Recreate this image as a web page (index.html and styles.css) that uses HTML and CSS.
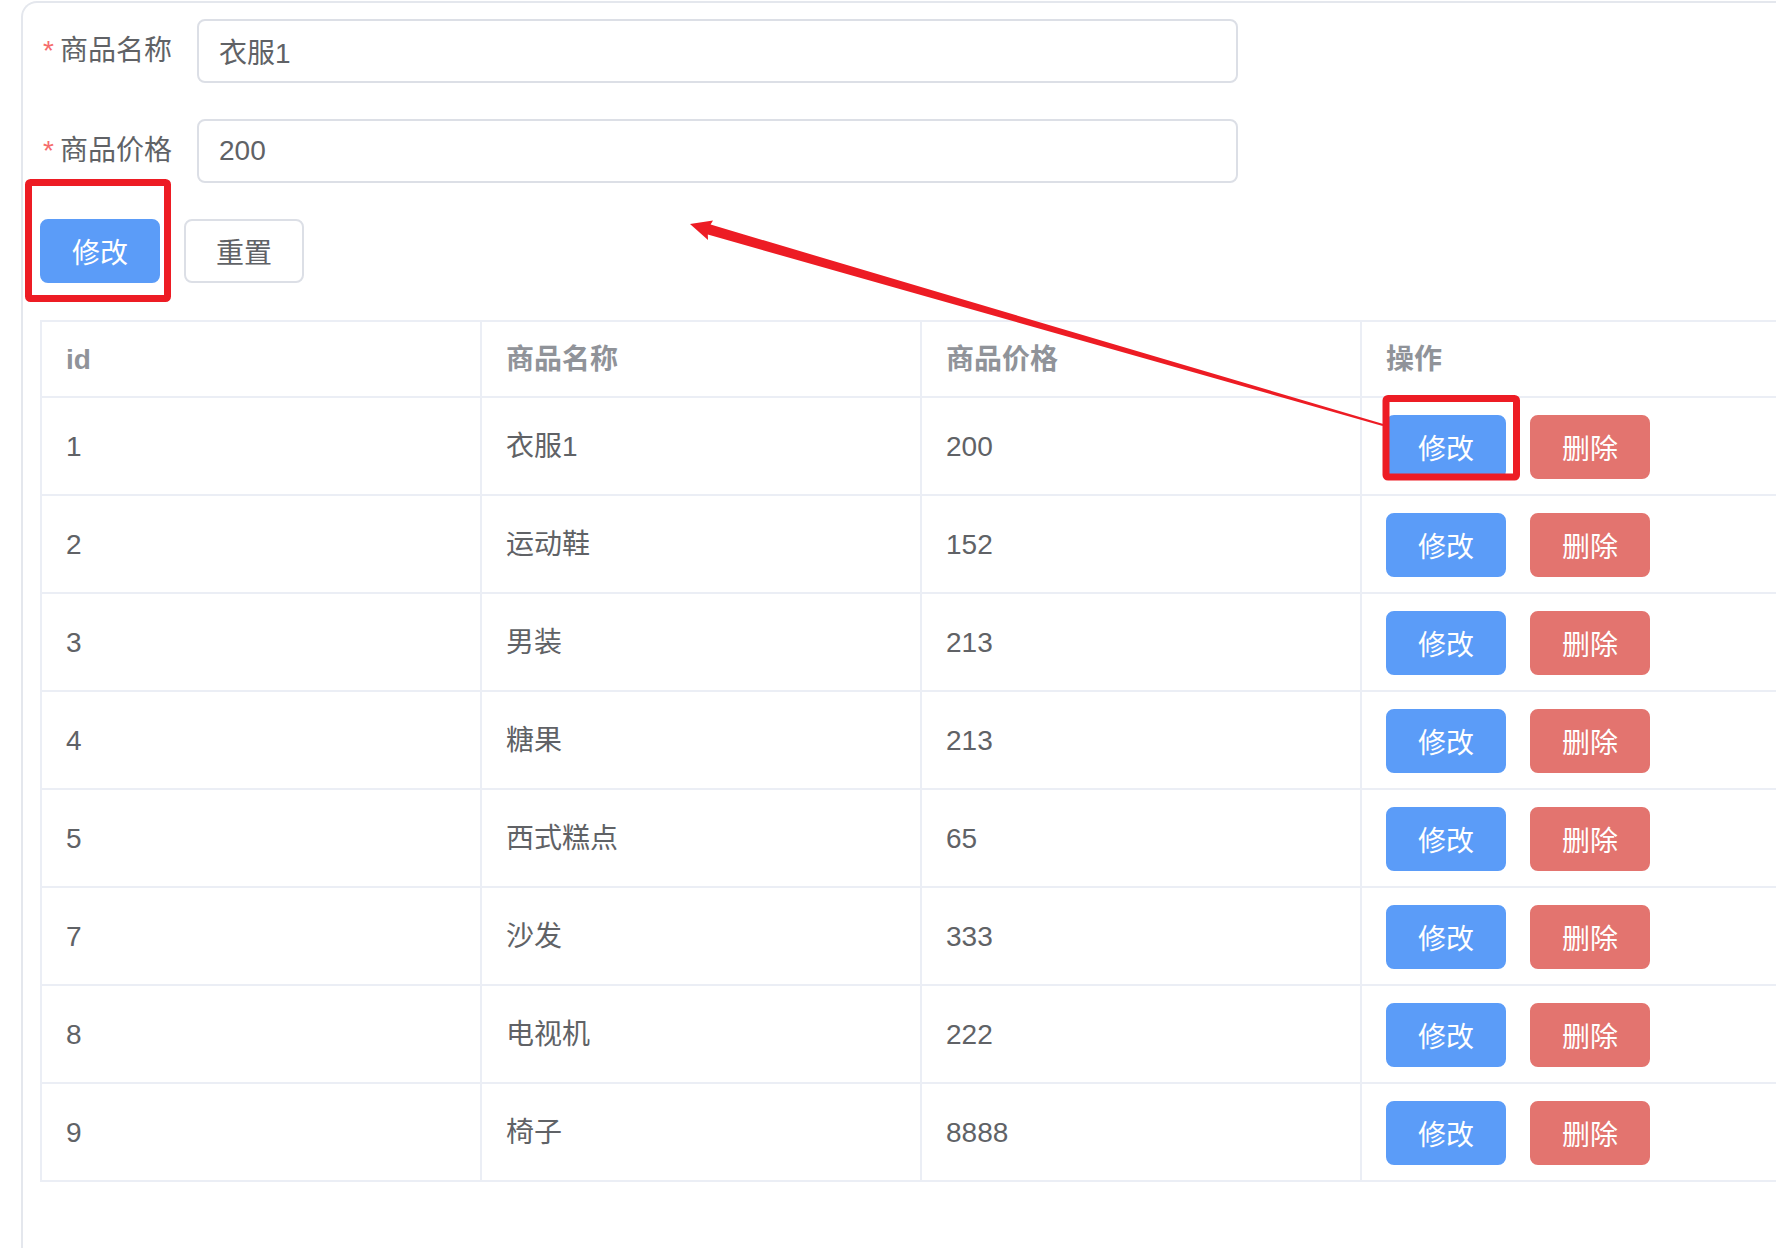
FILE: index.html
```html
<!DOCTYPE html>
<html lang="zh-CN">
<head>
    <meta charset="UTF-8">
    <title>商品管理</title>
    <link rel="stylesheet" href="styles.css">
</head>
<body>
    <div class="card">
        <form class="goods-form">
            <div class="form-item">
                <label class="form-label is-required" for="name">商品名称</label>
                <input class="form-input" id="name" type="text" value="衣服1">
            </div>
            <div class="form-item">
                <label class="form-label is-required" for="price">商品价格</label>
                <input class="form-input" id="price" type="text" value="200">
            </div>
            <div class="form-actions">
                <button type="button" class="btn btn-primary">修改</button>
                <button type="button" class="btn">重置</button>
            </div>
        </form>

        <table class="goods-table">
            <colgroup>
                <col class="col">
                <col class="col">
                <col class="col">
                <col class="col">
            </colgroup>
            <thead>
                <tr>
                    <th>id</th>
                    <th>商品名称</th>
                    <th>商品价格</th>
                    <th>操作</th>
                </tr>
            </thead>
            <tbody>
                <tr><td>1</td><td>衣服1</td><td>200</td><td><div class="ops"><button class="btn btn-primary">修改</button><button class="btn btn-danger">删除</button></div></td></tr>
                <tr><td>2</td><td>运动鞋</td><td>152</td><td><div class="ops"><button class="btn btn-primary">修改</button><button class="btn btn-danger">删除</button></div></td></tr>
                <tr><td>3</td><td>男装</td><td>213</td><td><div class="ops"><button class="btn btn-primary">修改</button><button class="btn btn-danger">删除</button></div></td></tr>
                <tr><td>4</td><td>糖果</td><td>213</td><td><div class="ops"><button class="btn btn-primary">修改</button><button class="btn btn-danger">删除</button></div></td></tr>
                <tr><td>5</td><td>西式糕点</td><td>65</td><td><div class="ops"><button class="btn btn-primary">修改</button><button class="btn btn-danger">删除</button></div></td></tr>
                <tr><td>7</td><td>沙发</td><td>333</td><td><div class="ops"><button class="btn btn-primary">修改</button><button class="btn btn-danger">删除</button></div></td></tr>
                <tr><td>8</td><td>电视机</td><td>222</td><td><div class="ops"><button class="btn btn-primary">修改</button><button class="btn btn-danger">删除</button></div></td></tr>
                <tr><td>9</td><td>椅子</td><td>8888</td><td><div class="ops"><button class="btn btn-primary">修改</button><button class="btn btn-danger">删除</button></div></td></tr>
            </tbody>
        </table>
    </div>

    <!-- annotation layer drawn over the screenshot -->
    <svg class="marks" width="1776" height="1248" viewBox="0 0 1776 1248">
        <rect x="28.5" y="182.5" width="139" height="116" rx="2" fill="none" stroke="#ed1c24" stroke-width="7"/>
        <rect x="1386" y="398.5" width="130.5" height="78.5" rx="2" fill="none" stroke="#ed1c24" stroke-width="7"/>
        <polygon fill="#ed1c24" points="690,224 713,220.5 710.6,224.6 1383.3,424 1382.7,426 707.8,234.6 708,240"/>
    </svg>
</body>
</html>
```

FILE: styles.css
```css
html, body {
    margin: 0;
    padding: 0;
    background-color: #fff;
}

body {
    overflow: hidden;
    width: 1776px;
    height: 1248px;
    font-family: "Liberation Sans", "Noto Sans CJK SC", sans-serif;
    font-size: 28px;
    color: #606266;
}

/* card runs off the right and bottom edge of the window */
.card {
    width: 1755px;
    height: 1247px;
    margin: 1px 0 0 21px;
    padding: 16px 0 0 17px;
    border: 2px solid #e4e7ed;
    border-right: 0;
    border-bottom: 0;
    border-radius: 16px 0 0 0;
    box-sizing: border-box;
    overflow: hidden;
}

.form-item {
    display: flex;
    align-items: center;
    margin-bottom: 36px;
}

.form-label {
    flex: none;
    width: 157px;
    padding-right: 25px;
    box-sizing: border-box;
    text-align: right;
    line-height: 64px;
    color: #606266;
}

.form-label.is-required::before {
    content: "*";
    color: #f56c6c;
    margin-right: 6px;
}

.form-input {
    width: 1041px;
    height: 64px;
    padding: 0 20px;
    border: 2px solid #dcdfe6;
    border-radius: 8px;
    box-sizing: border-box;
    font: inherit;
    color: #606266;
    outline: none;
}

.form-actions {
    display: flex;
    gap: 24px;
    margin-bottom: 37px;
}

.btn {
    height: 64px;
    padding: 0 30px;
    border: 2px solid #dcdfe6;
    border-radius: 8px;
    background-color: #fff;
    font-family: inherit;
    font-size: 28px;
    color: #606266;
    cursor: pointer;
}

.btn-primary {
    background-color: #5b9cf8;
    border-color: #5b9cf8;
    color: #fff;
}

.btn-danger {
    background-color: #e3746f;
    border-color: #e3746f;
    color: #fff;
}

.goods-table {
    width: 1762px;
    table-layout: fixed;
    border-collapse: separate;
    border-spacing: 0;
    border-left: 2px solid #ebeef5;
    border-top: 2px solid #ebeef5;
}

.goods-table .col {
    width: 440px;
}

.goods-table th,
.goods-table td {
    text-align: left;
    border-right: 2px solid #ebeef5;
    border-bottom: 2px solid #ebeef5;
    vertical-align: middle;
}

.goods-table th {
    padding: 16px 24px 14px;
    line-height: 44px;
    font-weight: bold;
    color: #909399;
}

.goods-table td {
    padding: 17px 24px 15px;
    line-height: 64px;
    color: #606266;
}

.ops {
    display: flex;
    gap: 24px;
}

.marks {
    position: absolute;
    top: 0;
    left: 0;
    pointer-events: none;
}
```
